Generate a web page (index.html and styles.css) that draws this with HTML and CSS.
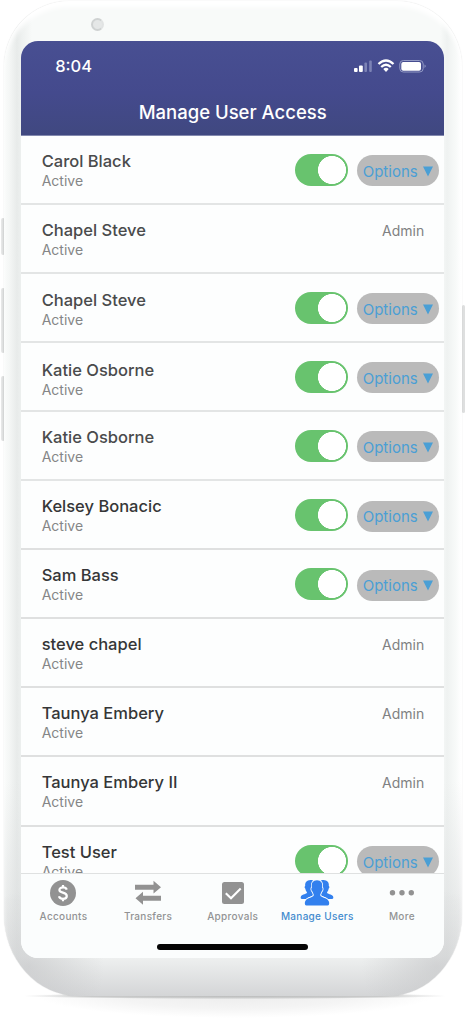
FILE: index.html
```html
<!DOCTYPE html>
<html lang="en">
<head>
<meta charset="utf-8">
<title>Manage User Access</title>
<link rel="stylesheet" href="styles.css">
</head>
<body>
<div class="stage">
  <i class="floor"></i>
  <i class="key key-a"></i><i class="key key-b"></i><i class="key key-c"></i><i class="key key-power"></i>
  <div class="phone">
    <i class="camera"></i>
    <div class="screen">
      <header class="header">
        <div class="status">
          <span class="time">8:04</span>
          <svg class="signals" width="74" height="16" viewBox="0 0 74 16">
            <g fill="#fff"><rect x="1" y="10" width="3.6" height="4" rx="1"/><rect x="6" y="7.5" width="3.8" height="6.5" rx="1"/></g>
            <g fill="#7c83b5"><rect x="11.4" y="4.5" width="2.6" height="9.5" rx="1"/><rect x="16.2" y="2.5" width="2.6" height="11.5" rx="1"/></g>
            <g fill="none" stroke="#fff" stroke-width="2.3"><path d="M25.5 6Q33 -1 40.500 6"/><path d="M28.200 9Q33 4.500 37.800 9"/></g>
            <path d="M30.300 11Q33 8.600 35.700 11L33 14Z" fill="#fff"/>
            <rect x="46.800" y="2.500" width="23.400" height="11.500" rx="3.500" fill="none" stroke="#9299c5"/>
            <rect x="48.300" y="4" width="19.700" height="8.700" rx="2" fill="#fff"/>
            <path d="M71.500 6.500Q74 8.200 71.500 10Z" fill="#9299c5"/>
          </svg>
        </div>
        <h1 class="title">Manage User Access</h1>
      </header>
      <main class="list">
        <div class="row"><div class="person"><div class="name">Carol Black</div><div class="state">Active</div></div><i class="toggle"></i><span class="options">Options <svg width="12" height="11" viewBox="0 0 12 11"><path d="M1 .5H11L6 10.500Z"/></svg></span></div>
        <div class="row"><div class="person"><div class="name">Chapel Steve</div><div class="state">Active</div></div><span class="admin">Admin</span></div>
        <div class="row drop-1"><div class="person"><div class="name">Chapel Steve</div><div class="state">Active</div></div><i class="toggle"></i><span class="options">Options <svg width="12" height="11" viewBox="0 0 12 11"><path d="M1 .5H11L6 10.500Z"/></svg></span></div>
        <div class="row drop-2"><div class="person"><div class="name">Katie Osborne</div><div class="state">Active</div></div><i class="toggle"></i><span class="options">Options <svg width="12" height="11" viewBox="0 0 12 11"><path d="M1 .5H11L6 10.500Z"/></svg></span></div>
        <div class="row"><div class="person"><div class="name">Katie Osborne</div><div class="state">Active</div></div><i class="toggle"></i><span class="options">Options <svg width="12" height="11" viewBox="0 0 12 11"><path d="M1 .5H11L6 10.500Z"/></svg></span></div>
        <div class="row dark"><div class="person"><div class="name">Kelsey Bonacic</div><div class="state">Active</div></div><i class="toggle"></i><span class="options">Options <svg width="12" height="11" viewBox="0 0 12 11"><path d="M1 .5H11L6 10.500Z"/></svg></span></div>
        <div class="row dark"><div class="person"><div class="name">Sam Bass</div><div class="state">Active</div></div><i class="toggle"></i><span class="options">Options <svg width="12" height="11" viewBox="0 0 12 11"><path d="M1 .5H11L6 10.500Z"/></svg></span></div>
        <div class="row dark"><div class="person"><div class="name">steve chapel</div><div class="state">Active</div></div><span class="admin">Admin</span></div>
        <div class="row dark"><div class="person"><div class="name">Taunya Embery</div><div class="state">Active</div></div><span class="admin">Admin</span></div>
        <div class="row dark"><div class="person"><div class="name">Taunya Embery II</div><div class="state">Active</div></div><span class="admin">Admin</span></div>
        <div class="row dark"><div class="person"><div class="name">Test User</div><div class="state">Active</div></div><i class="toggle"></i><span class="options">Options <svg width="12" height="11" viewBox="0 0 12 11"><path d="M1 .5H11L6 10.500Z"/></svg></span></div>
      </main>
      <nav class="tabs">
        <div class="tab"><svg width="36" height="28" viewBox="0 0 36 28"><circle cx="18" cy="14" r="13" fill="#929292"/><path d="M21.800 10.600C21.300 9.200 20 8.400 18 8.400C15.800 8.400 14.400 9.300 14.400 10.900C14.400 14.300 21.800 13 21.800 17C21.800 18.900 20.200 19.900 18 19.900C15.800 19.900 14.400 19 14 17.300M18 6V8.500M18 19.800V22.300" fill="none" stroke="#fff" stroke-width="2.200"/></svg><span>Accounts</span></div>
        <div class="tab"><svg width="36" height="28" viewBox="0 0 36 28"><path d="M5 5.700H23.500V1.800L31 8.200L23.500 14.500V10.700H5ZM31 16.700H13V12.700L5.500 19.200L13 25.700V21.700H31Z" fill="#929292"/></svg><span>Transfers</span></div>
        <div class="tab"><svg width="36" height="28" viewBox="0 0 36 28"><rect x="7" y="3" width="22" height="22" rx="2.500" fill="#929292"/><path d="M10.800 14.200L16 19.300L25.700 9.500" fill="none" stroke="#fff" stroke-width="2.100"/></svg><span>Approvals</span></div>
        <div class="tab active"><svg width="36" height="28" viewBox="0 0 36 28"><g fill="#3280ee"><path id="side" d="M9 1.500C11 .5 13.500 .8 15 2.200C13 5 12.500 8.500 13 11L14.500 16C12 18 9 18 7.500 20H3C1.700 20 1.300 18.500 2 17.200C3.200 15 8 15.200 8 13.200C7.200 12.200 6.500 11.200 6.400 9.700C5.300 9 5.400 7.200 6.200 7C5.900 4.500 6.500 2.700 9 1.500Z"/><use href="#side" transform="translate(36 0) scale(-1 1)"/><path d="M18 1.300C22 1.300 24 4.200 23.100 8.700C24.200 9 23.500 12.200 22.500 12.500C22.100 14 21.200 14.900 21.200 16.200C22.200 19 28.700 18.300 30 22.800C30.500 25 30 26.500 28.500 26.500H7.500C6 26.500 5.500 25 6 22.800C7.300 18.300 13.800 19 14.800 16.200C14.800 14.900 13.900 14 13.500 12.500C12.500 12.200 11.800 9 12.900 8.700C12 4.200 14 1.300 18 1.300Z" stroke="#fbfdfd" stroke-width="1.800" paint-order="stroke"/></g></svg><span>Manage Users</span></div>
        <div class="tab"><svg width="36" height="28" viewBox="0 0 36 28"><g fill="#929292"><circle cx="8.500" cy="13.800" r="2.700"/><circle cx="18" cy="13.800" r="2.700"/><circle cx="27.300" cy="13.800" r="2.700"/></g></svg><span>More</span></div>
        <i class="home"></i>
      </nav>
    </div>
  </div>
</div>
</body>
</html>
```
FILE: styles.css
```css
* { box-sizing: border-box; }
body { margin: 0; background: #fff; font-family: Inter, "Liberation Sans", sans-serif; }
.stage { position: relative; width: 468px; height: 1024px; overflow: hidden; padding: 1px 6px 0 4px; }

.phone {
  position: relative; height: 995px; padding: 40px 17.8px 0 17.2px;
  border-radius: 65px 65px 74px 74px / 65px 65px 82px 82px;
  background:
    radial-gradient(circle 75px at 25px 965px, rgba(190,191,193,.55), transparent),
    radial-gradient(circle 75px at 433px 965px, rgba(190,191,193,.55), transparent),
    linear-gradient(to bottom, rgba(205,207,208,0) 0, rgba(205,207,208,0) 780px, rgba(215,217,218,.45) 900px, rgba(232,234,234,.6) 956px, rgba(208,209,211,.9) 995px),
    linear-gradient(to right, #fafcfb 0, #f5f7f6 5px, #e8ebea 13px, #eef1f0 18px, #f8faf9 28px, #f8faf9 436px, #eff2f1 443px, #f8faf9 452px, #fff 457px);
  box-shadow: inset 0 7px 5px -1px #fff, 0 0 1px rgba(0,0,0,.2);
}
.camera { position: absolute; left: 87px; top: 17px; width: 13px; height: 13px; border-radius: 50%; background: #e5e7e7; border: 2px solid #cfd2d2; border-right-color: #e1e3e3; }
.key { position: absolute; left: 1px; width: 4px; border-radius: 2px; background: linear-gradient(to right, #e9eaea, #cfd1d1); }
.key-a { top: 218px; height: 37px; }
.key-b { top: 288px; height: 65px; }
.key-c { top: 376px; height: 65px; }
.key-power { left: 462px; top: 305px; width: 3px; height: 108px; background: #dedfdf; }
.floor { position: absolute; left: 22px; right: 20px; top: 994px; height: 30px; background: radial-gradient(ellipse 50% 3px at 50% 2px, #c0c1c1 0, #cecfcf 70%, transparent 100%), radial-gradient(ellipse 47% 24px at 50% 0, #ececec 0, #f4f4f4 60%, transparent 100%); }

.screen { display: flex; flex-direction: column; height: 916.5px; overflow: hidden; border-radius: 17px; background: #fdfefe; }
.header { flex: none; height: 95px; background: linear-gradient(#484f92, #444a8d 55%, #404880); border-bottom: 1px solid #8389ae; color: #fff; }
.status { display: flex; justify-content: space-between; align-items: center; height: 50px; padding: 0 17px 0 34px; }
.time { font-size: 16.500px; font-weight: 500; letter-spacing: 0; line-height: 20px; }
.signals { display: block; }
.title { margin: 10px 0 0; text-align: center; font-size: 18.500px; font-weight: 500; line-height: 22px; letter-spacing: 0; }

.list { flex: 1; min-height: 0; overflow: hidden; }
.row { display: flex; align-items: flex-start; height: 69.100px; padding: 15px 5px 0 20.500px; border-bottom: 2px solid #e3e5e5; color: #4a4b4c; }
.dark { color: #353637; border-bottom-color: #dfe0e0; }
.row:first-child { height: 68.700px; padding-top: 14.500px; }
.person { flex: 1; }
.name { font-size: 16.500px; font-weight: 500; line-height: 20px; white-space: nowrap; }
.state { font-size: 14px; line-height: 18px; margin-top: 1px; color: #858687; }
.drop-1 .person { margin-top: 1px; }
.drop-2 .person { margin-top: 2.500px; }
.toggle { flex: none; width: 53px; height: 32px; margin: 3.300px 9px 0 0; border-radius: 16px; background: radial-gradient(circle 14px at 37px 16px, #fff 13.700px, transparent 14.300px), #68c36e; }
.options { flex: none; display: flex; align-items: center; justify-content: center; gap: 4px; width: 82px; height: 31px; margin-top: 4.500px; padding-top: 1px; border-radius: 16px; background: #bababa; color: #4a9fd5; font-size: 15px; }
.options svg { display: block; fill: currentColor; }
.admin { margin: 2px 15px 0 0; font-size: 14px; line-height: 18px; color: #808182; }

.tabs { position: relative; flex: none; display: grid; grid-template-columns: repeat(5, 1fr); height: 85px; padding-top: 5px; border-top: 1px solid #dfe1e1; background: #fbfdfd; }
.tab { display: flex; flex-direction: column; align-items: center; color: #929394; font-size: 10px; font-weight: 500; line-height: 13px; letter-spacing: .3px; gap: 3px; white-space: nowrap; }
.tab svg { display: block; flex: none; }
.active { color: #438bce; }
.home { position: absolute; left: 136px; top: 70.500px; width: 151px; height: 6px; border-radius: 3px; background: #050505; }
```
